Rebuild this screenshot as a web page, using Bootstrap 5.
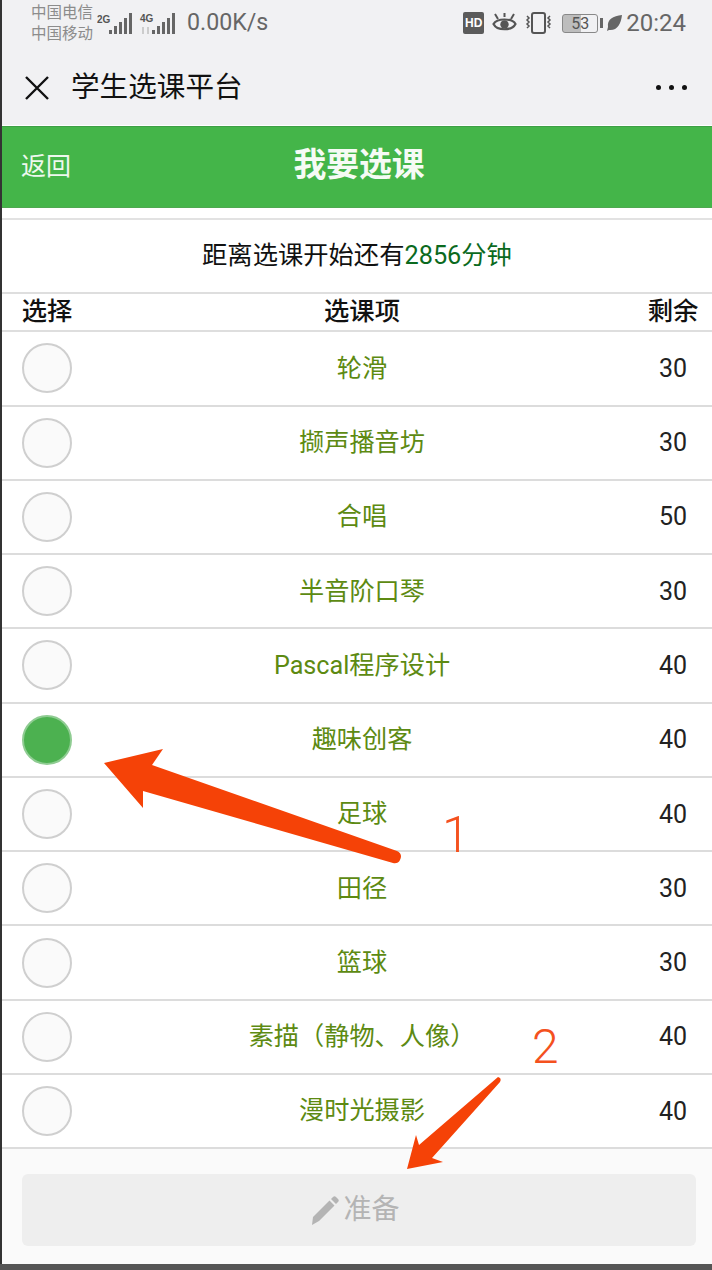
<!DOCTYPE html>
<html lang="zh-CN">
<head>
<meta charset="utf-8">
<title>学生选课平台</title>
<link href="https://cdn.jsdelivr.net/npm/bootstrap@5.3.0/dist/css/bootstrap.min.css" rel="stylesheet">
<style>
html,body{margin:0;height:1270px;overflow:hidden;background:#fff;}
body{font-family:Roboto,"Noto Sans CJK SC",sans-serif;color:#111;position:relative;}
.phone{height:1264px;border-left:2px solid #333;background:#fff;}
.chrome-top{height:125px;background:#f1f1f3;}
.status-line{height:50px;padding-bottom:4px;color:#666;}
.carrier{width:62px;margin-left:29px;font-size:15.5px;line-height:21px;color:#8c8c8c;padding-top:1px;white-space:nowrap;}
.speed{font-size:23.2px;margin-left:6px;line-height:1;}
.clock{font-size:24px;line-height:1;margin-left:4px;margin-right:26px;}
.sig{display:block;}
.hd-box{width:21px;height:22px;background:#5b5b5b;color:#fff;border-radius:2px;font-size:12px;font-weight:700;line-height:22px;text-align:center;margin-right:8px;font-family:"Liberation Sans",sans-serif;}
.batt{width:36px;height:19px;border:1px solid #888;border-radius:3px;font-size:16px;line-height:17px;text-align:center;color:#555;background:linear-gradient(90deg,#bdbdbd 53%,#f1f1f3 53%);margin-left:9px;}
.nub{width:3px;height:10px;background:#666;margin:0 4px 0 2px;}
.title-line{height:75px;padding:0 25px 0 22px;}
.app-name{font-size:28.6px;margin-left:21px;color:#111;line-height:1;}
.dot3{width:5px;height:5px;background:#111;border-radius:50%;}
.green-head{height:82px;margin-top:1px;background:#44b549;border-top:1px solid #3d9f45;border-bottom:1px solid #4ea850;color:#eef8ee;position:relative;}
.back-txt{font-size:25px;padding-left:19px;line-height:1;}
.page-name{font-size:32.8px;font-weight:700;color:#f6fbf5;line-height:1;padding-left:4px;}
.center-abs{left:0;right:0;text-align:center;position:absolute;top:22px;}
.countdown{margin-top:10px;height:76px;border-top:2px solid #e2e2e2;border-bottom:2px solid #dedede;font-size:25.3px;}
.countdown b{font-weight:400;color:#0b6a1e;}
.tbl-row{height:74.36px;border-bottom:2px solid #dcdcdc;}
.tbl-head{height:38.5px;font-size:25.3px;font-weight:500;color:#111;border-bottom:2px solid #dedede;}
.c-a{width:90px;}
.c-b{width:540px;}
.c-c{width:80px;padding-left:2px;}
.course{font-size:25.2px;color:#5d8a12;line-height:1;}
.left-num{font-size:25px;color:#222;line-height:1;}
.pick.form-check-input{width:50px;height:50px;margin:0;background-color:#fafafa;border:2px solid #cfcfcf;}
.pick.form-check-input:checked{background-color:#4cb150;border-color:#8fcc92;background-image:none;}
.foot-zone{height:115px;background:#fafafa;padding:25px 16px 0 20px;}
.prep.btn{height:72px;background:#eeeeee;border:0;border-radius:6px;color:#b4b4b4;font-size:28px;opacity:1;line-height:1;padding-right:20px;}
.base-strip{height:6px;background:#555;}
.overlay{position:absolute;left:0;top:0;pointer-events:none;}
.mark-num{position:absolute;color:#f4511e;font-size:50px;line-height:1;font-family:Roboto,sans-serif;font-weight:300;}
.n1{left:442px;top:810px;}
.n2{left:532px;top:1023px;font-size:48px;}
</style>
</head>
<body>
<div class="phone d-flex flex-column">
  <div class="chrome-top">
    <div class="status-line d-flex align-items-center">
      <div class="carrier"><div>中国电信</div><div>中国移动</div></div>
      <svg class="sig" width="84" height="24" viewBox="0 0 84 24" style="margin-left:4px">
        <text x="0" y="12" font-size="10" font-weight="700" fill="#555" font-family="Liberation Sans">2G</text>
        <g fill="#666"><rect x="12" y="19" width="3" height="4"/><rect x="17" y="15" width="3" height="8"/><rect x="22" y="11" width="3" height="12"/><rect x="27" y="7" width="3" height="16"/><rect x="32" y="2" width="3" height="21"/></g>
        <text x="43" y="11" font-size="10" font-weight="700" fill="#555" font-family="Liberation Sans">4G</text>
        <path d="M46 16v7M51 16v7" stroke="#ccc" stroke-width="2"/>
        <g fill="#666"><rect x="55" y="19" width="3" height="4"/><rect x="60" y="15" width="3" height="8"/><rect x="65" y="11" width="3" height="12"/><rect x="70" y="7" width="3" height="16"/><rect x="75" y="2" width="3" height="21"/></g>
      </svg>
      <div class="speed">0.00K/s</div>
      <div class="ms-auto d-flex align-items-center">
        <div class="hd-box">HD</div>
        <svg width="25" height="22" viewBox="0 0 25 22" class="sig"><path d="M1.500 12C5 6 20 6 23.500 12 20 19 5 19 1.500 12Z" fill="none" stroke="#555" stroke-width="2.200"/><circle cx="12.500" cy="12.500" r="4.200" fill="#555"/><path d="M3 2l3 5M22 2l-3 5M12.500 1v4" stroke="#555" stroke-width="2"/></svg>
        <svg width="29" height="22" viewBox="0 0 29 22" class="sig" style="margin-left:7px"><rect x="8" y="1" width="13" height="20" rx="2" fill="none" stroke="#555" stroke-width="2"/><path d="M3 4l2 2-2 2 2 2-2 2 2 2-2 2M26 4l-2 2 2 2-2 2 2 2-2 2 2 2" fill="none" stroke="#555" stroke-width="1.500"/></svg>
        <div class="batt">53</div>
        <div class="nub"></div>
        <svg width="15" height="16" viewBox="0 0 15 16" class="sig"><path d="M15 0C6 1 0 4 1 12L0 16 2 15C10 16 14 9 15 0Z" fill="#666"/></svg>
        <div class="clock">20:24</div>
      </div>
    </div>
    <div class="title-line d-flex align-items-center">
      <svg width="26" height="26" viewBox="0 0 26 26" class="sig"><path d="M2 2l22 22M24 2L2 24" stroke="#111" stroke-width="2.400"/></svg>
      <div class="app-name">学生选课平台</div>
      <div class="ms-auto d-flex gap-2"><span class="dot3"></span><span class="dot3"></span><span class="dot3"></span></div>
    </div>
  </div>
  <div class="green-head d-flex align-items-center">
    <div class="back-txt">返回</div>
    <div class="page-name center-abs">我要选课</div>
  </div>
  <div class="countdown d-flex align-items-center justify-content-center">
    <span>距离选课开始还有<b>2856分钟</b></span>
  </div>
  <div class="tbl-head d-flex align-items-center text-center">
    <div class="c-a">选择</div><div class="c-b">选课项</div><div class="c-c">剩余</div>
  </div>
  <div class="tbl-row d-flex align-items-center text-center"><div class="c-a d-flex justify-content-center"><input class="form-check-input pick" type="radio" name="c" aria-label="轮滑"></div><div class="c-b course">轮滑</div><div class="c-c left-num">30</div></div>
  <div class="tbl-row d-flex align-items-center text-center"><div class="c-a d-flex justify-content-center"><input class="form-check-input pick" type="radio" name="c" aria-label="撷声播音坊"></div><div class="c-b course">撷声播音坊</div><div class="c-c left-num">30</div></div>
  <div class="tbl-row d-flex align-items-center text-center"><div class="c-a d-flex justify-content-center"><input class="form-check-input pick" type="radio" name="c" aria-label="合唱"></div><div class="c-b course">合唱</div><div class="c-c left-num">50</div></div>
  <div class="tbl-row d-flex align-items-center text-center"><div class="c-a d-flex justify-content-center"><input class="form-check-input pick" type="radio" name="c" aria-label="半音阶口琴"></div><div class="c-b course">半音阶口琴</div><div class="c-c left-num">30</div></div>
  <div class="tbl-row d-flex align-items-center text-center"><div class="c-a d-flex justify-content-center"><input class="form-check-input pick" type="radio" name="c" aria-label="Pascal程序设计"></div><div class="c-b course">Pascal程序设计</div><div class="c-c left-num">40</div></div>
  <div class="tbl-row d-flex align-items-center text-center"><div class="c-a d-flex justify-content-center"><input class="form-check-input pick" type="radio" name="c" checked aria-label="趣味创客"></div><div class="c-b course">趣味创客</div><div class="c-c left-num">40</div></div>
  <div class="tbl-row d-flex align-items-center text-center"><div class="c-a d-flex justify-content-center"><input class="form-check-input pick" type="radio" name="c" aria-label="足球"></div><div class="c-b course">足球</div><div class="c-c left-num">40</div></div>
  <div class="tbl-row d-flex align-items-center text-center"><div class="c-a d-flex justify-content-center"><input class="form-check-input pick" type="radio" name="c" aria-label="田径"></div><div class="c-b course">田径</div><div class="c-c left-num">30</div></div>
  <div class="tbl-row d-flex align-items-center text-center"><div class="c-a d-flex justify-content-center"><input class="form-check-input pick" type="radio" name="c" aria-label="篮球"></div><div class="c-b course">篮球</div><div class="c-c left-num">30</div></div>
  <div class="tbl-row d-flex align-items-center text-center"><div class="c-a d-flex justify-content-center"><input class="form-check-input pick" type="radio" name="c" aria-label="素描"></div><div class="c-b course">素描（静物、人像）</div><div class="c-c left-num">40</div></div>
  <div class="tbl-row d-flex align-items-center text-center"><div class="c-a d-flex justify-content-center"><input class="form-check-input pick" type="radio" name="c" aria-label="漫时光摄影"></div><div class="c-b course">漫时光摄影</div><div class="c-c left-num">40</div></div>
  <div class="foot-zone">
    <button class="btn prep disabled w-100 d-flex align-items-center justify-content-center gap-1" type="button">
      <svg width="29" height="29" viewBox="0 0 29 29"><path d="M23 1c1-1 2-1 3 0l2 2c1 1 1 2 0 3l-2 2-5-5zM19.500 4.500l5 5L9 25l-7 4 1-8z" fill="#b4b4b4"/></svg>
      <span>准备</span>
    </button>
  </div>
</div>
<div class="base-strip"></div>
<svg class="overlay" width="712" height="1270" viewBox="0 0 712 1270">
  <path d="M104 763L163 749 152 765 397 851Q403 854 400 860 398 864 393 863L143 791V808Z" fill="#f54207"/>
  <path d="M407 1169L443 1162 432 1158 500 1082Q502 1078 498 1077L419 1145 416 1135Z" fill="#f54207"/>
</svg>
<div class="mark-num n1">1</div>
<div class="mark-num n2">2</div>
<script src="https://cdn.jsdelivr.net/npm/bootstrap@5.3.0/dist/js/bootstrap.bundle.min.js"></script>
</body>
</html>
